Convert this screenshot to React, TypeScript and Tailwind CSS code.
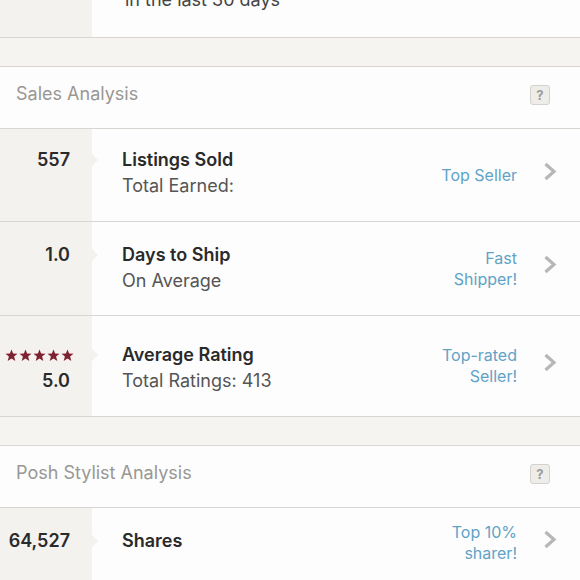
import React from "react";

// Seller stats panel — closet analysis rows with a badge and chevron.

type Stat = {
  id: string;
  left: React.ReactNode[];
  title: string;
  sub?: React.ReactNode;
  badge: string[];
  h: string;
  shift: string;
  lift: string;
};

const font = { fontFamily: "Inter, 'Open Sans', sans-serif" };

function Chevron() {
  return (
    <svg width="14" height="19" viewBox="0 0 14 19" className="shrink-0">
      <path d="M2.5 2 L11 9.5 L2.5 17" fill="none" stroke="#b7b7b7" strokeWidth="3.2" strokeLinejoin="miter" />
    </svg>
  );
}

function Stars() {
  const star = "M6.5 0.5 L8.1 4.6 L12.5 4.8 L9.1 7.6 L10.3 12 L6.5 9.5 L2.7 12 L3.9 7.6 L0.5 4.8 L4.9 4.6 Z";
  return (
    <div className="flex gap-[1px]">
      {[0, 1, 2, 3, 4].map((i) => (
        <svg key={i} width="13" height="13" viewBox="0 0 13 13">
          <path d={star} fill="#7e2232" />
        </svg>
      ))}
    </div>
  );
}

function Help() {
  return (
    <div className="w-[20px] h-[20px] rounded-[3px] border border-[#d5d2ce] bg-[#efedea] flex items-center justify-center text-[13px] font-bold text-[#9a9a9a] leading-none">
      ?
    </div>
  );
}

function Spacer() {
  return <div className="h-[29px] bg-[#f6f4f1] border-b border-[#d9d6d1]" />;
}

function Header({ label }: { label: string }) {
  return (
    <div className="h-[62px] bg-[#fdfdfd] border-b border-[#d9d6d1] flex items-center justify-between pl-[16px] pr-[30px] pb-[8px]">
      <span className="text-[18px] text-[#999794]">{label}</span>
      <div className="mt-[3px]">
        <Help />
      </div>
    </div>
  );
}

function Row({ s }: { s: Stat }) {
  return (
    <div className={`flex bg-[#fdfdfd] border-b border-[#d9d6d1] ${s.h}`}>
      <div className={`w-[92px] shrink-0 bg-[#f4f2ef] ${s.lift}`}>
        <div className={`h-full flex flex-col items-end justify-center pr-[22px] ${s.shift}`}>
          {s.left.map((l, i) => (
            <div key={i} className="relative h-[26px] flex items-center">
              {l}
              {i === 0 && (
                <div className="absolute right-[-28px] top-1/2 -translate-y-1/2 w-0 h-0 border-y-[6px] border-y-transparent border-l-[6px] border-l-[#f4f2ef]" />
              )}
            </div>
          ))}
        </div>
      </div>
      <div className={`flex-1 flex items-center pl-[30px] pr-[23px] ${s.lift}`}>
        <div className={`flex-1 flex flex-col ${s.shift}`}>
          <span className="text-[18px] font-semibold text-[#2a2a2a] leading-[26px]">{s.title}</span>
          {s.sub && <span className="text-[18px] text-[#555] leading-[26px]">{s.sub}</span>}
        </div>
        <div className="flex flex-col items-end text-[16px] leading-[21px] text-[#5fa3c7] mr-[26px]">
          {s.badge.map((b) => (
            <span key={b}>{b}</span>
          ))}
        </div>
        <div className="pb-[8px]">
          <Chevron />
        </div>
      </div>
    </div>
  );
}

const num = (v: string) => <span className="text-[18px] font-semibold text-[#2a2a2a] leading-[26px]">{v}</span>;

const SALES: Stat[] = [
  { id: "sold", left: [num("557"), null], title: "Listings Sold", sub: "Total Earned: ", badge: ["Top Seller"], h: "h-[93px]", shift: "pb-[4px]", lift: "" },
  { id: "ship", left: [num("1.0"), null], title: "Days to Ship", sub: "On Average", badge: ["Fast", "Shipper!"], h: "h-[94px]", shift: "pb-[2px]", lift: "" },
  {
    id: "rating",
    left: [
      <div className="mr-[-4px]">
        <Stars />
      </div>,
      num("5.0"),
    ],
    title: "Average Rating",
    sub: "Total Ratings: 413",
    badge: ["Top-rated", "Seller!"],
    h: "h-[101px]",
    shift: "pt-[4px]",
    lift: "",
  },
];

const STYLIST: Stat[] = [
  { id: "shares", left: [num("64,527")], title: "Shares", badge: ["Top 10%", "sharer!"], h: "h-[76px]", shift: "pb-[4px]", lift: "pb-[5px]" },
];

export default function App() {
  return (
    <div className="w-[580px] h-[580px] overflow-hidden bg-[#fdfdfd]" style={font}>
      <div className="flex h-[38px] border-b border-[#d9d6d1]">
        <div className="w-[92px] bg-[#f4f2ef]" />
        <div className="pl-[33px] mt-[-13px] text-[18px] leading-[26px] text-[#444]">in the last 30 days</div>
      </div>
      <Spacer />
      <Header label="Sales Analysis" />
      {SALES.map((s) => (
        <Row key={s.id} s={s} />
      ))}
      <Spacer />
      <Header label="Posh Stylist Analysis" />
      {STYLIST.map((s) => (
        <Row key={s.id} s={s} />
      ))}
    </div>
  );
}
